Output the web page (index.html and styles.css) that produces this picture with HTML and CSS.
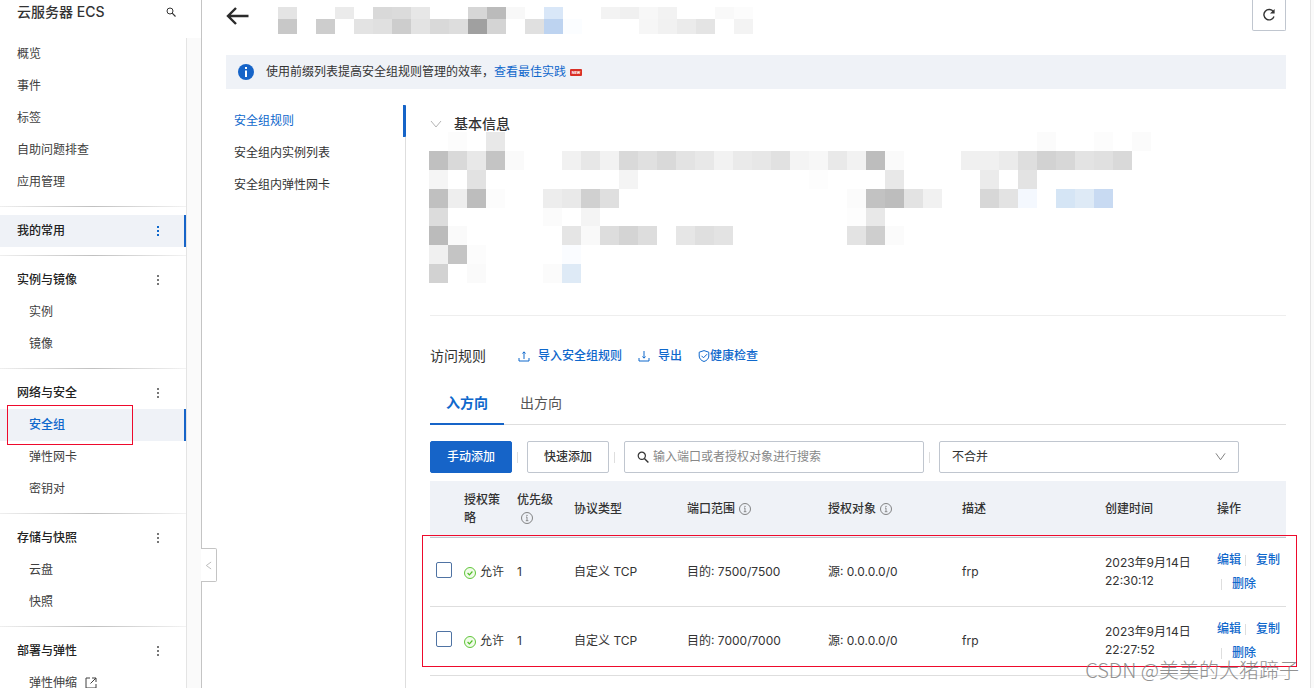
FILE: index.html
```html
<!DOCTYPE html>
<html lang="zh-CN">
<head>
<meta charset="utf-8">
<title>云服务器 ECS</title>
<link rel="stylesheet" href="styles.css">
</head>
<body>
<svg class="defs" aria-hidden="true">
  <symbol id="info" viewBox="0 0 12 12"><circle cx="6" cy="6" r="5.5" fill="none" stroke="currentColor" stroke-width=".8"/><path d="M5 5h1v3.6M4.8 8.7h2.6" fill="none" stroke="currentColor" stroke-width=".7"/><circle cx="6" cy="3.3" r=".6" fill="currentColor"/></symbol>
  <symbol id="allow" viewBox="0 0 12 12"><circle cx="6" cy="6" r="5.5" fill="#f0fbe9" stroke="#4fbe26" stroke-width=".9"/><path d="M3.6 6l1.8 1.8 3-3.3" fill="none" stroke="#4fbe26" stroke-width="1.2"/></symbol>
  <symbol id="search" viewBox="0 0 12 12"><circle cx="4.8" cy="4.8" r="3.6" fill="none" stroke="currentColor" stroke-width="1.2"/><path d="M7.4 7.4l4 4" stroke="currentColor" stroke-width="1.4"/></symbol>
  <symbol id="more" viewBox="0 0 4 12"><path d="M1 1h2v2H1zM1 5h2v2H1zM1 9h2v2H1z" fill="currentColor"/></symbol>
</svg>
<div class="app">
  <aside class="sidebar">
    <header class="side-head"><h1>云服务器 ECS</h1><button class="plain" aria-label="搜索"><svg class="i-10"><use href="#search"/></svg></button></header>
    <div class="side-body">
      <nav class="menu">
        <a href="#">概览</a>
        <a href="#">事件</a>
        <a href="#">标签</a>
        <a href="#">自助问题排查</a>
        <a href="#">应用管理</a>
        <hr>
        <a href="#" class="group current">我的常用<svg class="dots"><use href="#more"/></svg></a>
        <hr>
        <a href="#" class="group">实例与镜像<svg class="dots"><use href="#more"/></svg></a>
        <a href="#" class="sub">实例</a>
        <a href="#" class="sub">镜像</a>
        <hr>
        <a href="#" class="group">网络与安全<svg class="dots"><use href="#more"/></svg></a>
        <a href="#" class="sub current chosen">安全组<span class="mark mark-menu"></span></a>
        <a href="#" class="sub">弹性网卡</a>
        <a href="#" class="sub">密钥对</a>
        <hr>
        <a href="#" class="group">存储与快照<svg class="dots"><use href="#more"/></svg></a>
        <a href="#" class="sub">云盘</a>
        <a href="#" class="sub">快照</a>
        <hr>
        <a href="#" class="group">部署与弹性<svg class="dots"><use href="#more"/></svg></a>
        <a href="#" class="sub">弹性伸缩<svg class="ext" viewBox="0 0 12 12"><path d="M5 1H1v10h10V7M7 1h4v4M11 1L5.500 6.500" fill="none" stroke="currentColor"/></svg></a>
      </nav>
      <div class="track"></div>
    </div>
    <button class="fold" aria-label="收起"><svg viewBox="0 0 8 10"><path d="M7 1L1.500 5 7 9" fill="none" stroke="#b5b5b5"/></svg></button>
  </aside>

  <main class="page">
    <header class="page-head">
      <button class="plain" aria-label="返回"><svg class="back" viewBox="0 0 22 18"><path d="M9.500 1L1.500 9l8 8M2 9h20" fill="none" stroke="#2b2b2b" stroke-width="2.400"/></svg></button>
      <svg class="mosaic head-mosaic" viewBox="0 0 475 27" preserveAspectRatio="none" aria-hidden="true">
        <g class="top">
          <rect x="0" fill="#e4e4e4"/><rect x="57" fill="#ebebeb"/><rect x="95" fill="#d9d9d9"/><rect x="114" fill="#dbdbdb"/><rect x="133" fill="#e7e7e7"/><rect x="190" fill="#d6d6d6"/><rect x="209" fill="#bbb"/><rect x="228" fill="#f8f8f8"/><rect x="266" fill="#d9e7f8"/><rect x="323" fill="#f3f3f3"/><rect x="342" fill="#f0f0f0"/><rect x="361" fill="#f7f7f7"/><rect x="380" fill="#f2f2f2"/><rect x="437" fill="#f9f9f9"/><rect x="456" fill="#fcfcfc"/>
        </g>
        <g class="low">
          <rect x="0" fill="#c8c8c8"/><rect x="38" fill="#cdcdcd"/><rect x="76" fill="#e3e3e3"/><rect x="95" fill="#e0e0e0"/><rect x="114" fill="#cdcdcd"/><rect x="133" fill="#e3e3e3"/><rect x="152" fill="#d9d9d9"/><rect x="171" fill="#ddd"/><rect x="190" fill="#a0a0a0"/><rect x="209" fill="#d4d4d4"/><rect x="247" fill="#e0e0e0"/><rect x="266" fill="#bdd3f0"/><rect x="285" fill="#fbfdff"/><rect x="361" fill="#f6f6f6"/><rect x="380" fill="#f1f1f1"/><rect x="399" fill="#ebebeb"/><rect x="418" fill="#e4e4e4"/><rect x="456" fill="#f3f3f3"/>
        </g>
      </svg>
      <button class="refresh" aria-label="刷新"><svg viewBox="0 0 14 14"><path d="M11.300 3.600A5.200 5.200 0 1 0 12 8.500" fill="none" stroke="#333" stroke-width="1.400"/><path d="M12.600 1v4.600H8z" fill="#333"/></svg></button>
    </header>

    <div class="notice">
      <svg class="i-16" viewBox="0 0 16 16"><circle cx="8" cy="8" r="8" fill="#1664c8"/><path d="M7 3h2v2H7zM7 6.500h2V13H7z" fill="#fff"/></svg>
      <p>使用前缀列表提高安全组规则管理的效率，<a href="#">查看最佳实践</a></p><span class="new">NEW</span>
    </div>

    <div class="columns">
      <nav class="tabs-side">
        <a href="#" class="on">安全组规则</a>
        <a href="#">安全组内实例列表</a>
        <a href="#">安全组内弹性网卡</a>
      </nav>
      <div class="content">
        <section class="basic">
          <h2><svg viewBox="0 0 12 8"><path d="M1 1l5 6 5-6" fill="none" stroke="#b5b5b5"/></svg>基本信息</h2>
          <svg class="mosaic info-mosaic" viewBox="0 0 38 8" preserveAspectRatio="none" aria-hidden="true">
            <g><rect x="1" fill="#fcfcfc"/><rect x="3" fill="#e8e8e8"/><rect x="32" fill="#fbfbfb"/><rect x="35" fill="#fcfcfc"/><rect x="37" fill="#fbfbfb"/></g>
            <g transform="translate(0 1)"><rect x="0" fill="#c0c0c0"/><rect x="1" fill="#d9d9d9"/><rect x="2" fill="#e8e8e8"/><rect x="3" fill="#c4c4c4"/><rect x="4" fill="#fafafa"/><rect x="7" fill="#f1f1f1"/><rect x="8" fill="#e7e7e7"/><rect x="9" fill="#f2f2f2"/><rect x="10" fill="#d9d9d9"/><rect x="11" fill="#e0e0e0"/><rect x="12" fill="#d9d9d9"/><rect x="13" fill="#e3e3e3"/><rect x="14" fill="#e8e8e8"/><rect x="15" fill="#f2f2f2"/><rect x="16" fill="#eaeaea"/><rect x="17" fill="#e7e7e7"/><rect x="18" fill="#e1e1e1"/><rect x="19" fill="#f4f4f4"/><rect x="20" fill="#f7f7f7"/><rect x="21" fill="#e9e9e9"/><rect x="22" fill="#f2f2f2"/><rect x="23" fill="#bdbdbd"/><rect x="24" fill="#fafafa"/><rect x="28" fill="#f0f0f0"/><rect x="29" fill="#f0f0f0"/><rect x="30" fill="#ebebeb"/><rect x="31" fill="#dedede"/><rect x="32" fill="#d2d2d2"/><rect x="33" fill="#d7d7d7"/><rect x="34" fill="#e3e3e3"/><rect x="35" fill="#e0e0e0"/><rect x="36" fill="#d9d9d9"/></g>
            <g transform="translate(0 2)"><rect x="0" fill="#f5f5f5"/><rect x="2" fill="#e2e2e2"/><rect x="10" fill="#f4f4f4"/><rect x="20" fill="#fdfdfd"/><rect x="24" fill="#e8e8e8"/><rect x="29" fill="#ebebeb"/><rect x="31" fill="#e3e3e3"/></g>
            <g transform="translate(0 3)"><rect x="0" fill="#c0c0c0"/><rect x="1" fill="#eee"/><rect x="2" fill="#bdbdbd"/><rect x="3" fill="#fcfcfc"/><rect x="6" fill="#ededed"/><rect x="7" fill="#e9e9e9"/><rect x="8" fill="#d0d0d0"/><rect x="9" fill="#dfdfdf"/><rect x="22" fill="#fbfbfb"/><rect x="23" fill="#c2c2c2"/><rect x="24" fill="#bdbdbd"/><rect x="25" fill="#e3e3e3"/><rect x="26" fill="#f1f1f1"/><rect x="29" fill="#d7d7d7"/><rect x="30" fill="#e3e3e3"/><rect x="31" fill="#f4f8fe"/><rect x="33" fill="#d5e5f5"/><rect x="34" fill="#deeaf6"/><rect x="35" fill="#c8daf2"/></g>
            <g transform="translate(0 4)"><rect x="0" fill="#dcdcdc"/><rect x="6" fill="#fbfbfb"/><rect x="8" fill="#f4f4f4"/><rect x="22" fill="#fdfdfd"/><rect x="23" fill="#e8e8e8"/></g>
            <g transform="translate(0 5)"><rect x="0" fill="#bbb"/><rect x="1" fill="#fafafa"/><rect x="7" fill="#e5e5e5"/><rect x="8" fill="#f9f9f9"/><rect x="9" fill="#ddd"/><rect x="10" fill="#d4d4d4"/><rect x="11" fill="#ddd"/><rect x="13" fill="#e6e6e6"/><rect x="14" fill="#dfdfdf"/><rect x="15" fill="#e3e3e3"/><rect x="22" fill="#e3e3e3"/><rect x="23" fill="#cecece"/><rect x="24" fill="#fbfbfb"/></g>
            <g transform="translate(0 6)"><rect x="0" fill="#f0f0f0"/><rect x="1" fill="#c4c4c4"/><rect x="2" fill="#fcfcfc"/><rect x="7" fill="#fafcff"/></g>
            <g transform="translate(0 7)"><rect x="0" fill="#d2d2d2"/><rect x="2" fill="#fafafa"/><rect x="6" fill="#fbfbfb"/><rect x="7" fill="#deeaf6"/></g>
          </svg>
        </section>

        <section class="rules">
          <div class="rules-head">
            <h2>访问规则</h2>
            <a href="#"><svg class="i-12 spaced" viewBox="0 0 12 12"><path d="M1 8v3h10V8M6 9V2M4.500 3.500L6 1.800l1.500 1.700" fill="none" stroke="currentColor"/></svg>导入安全组规则</a>
            <a href="#"><svg class="i-12 spaced" viewBox="0 0 12 12"><path d="M1 8v3h10V8M6 1v7M4.500 6.500L6 8.200l1.500-1.700" fill="none" stroke="currentColor"/></svg>导出</a>
            <a href="#"><svg class="i-12" viewBox="0 0 12 12"><path d="M6 .6l4.800 1.600V6c0 2.700-2 4.600-4.800 5.500C3.200 10.600 1.200 8.700 1.200 6V2.200zM3.500 5.800l2 2 3.500-3.600" fill="none" stroke="currentColor"/></svg>健康检查</a>
          </div>
          <div class="tabs" role="tablist">
            <button role="tab" aria-selected="true">入方向</button>
            <button role="tab" aria-selected="false">出方向</button>
          </div>
          <div class="toolbar">
            <button class="btn primary">手动添加</button><i class="sep"></i>
            <button class="btn">快速添加</button><i class="sep"></i>
            <label class="field"><svg class="i-12"><use href="#search"/></svg><input type="text" aria-label="搜索" placeholder="输入端口或者授权对象进行搜索"></label><i class="sep"></i>
            <div class="field"><select aria-label="合并方式"><option>不合并</option></select><svg class="arrow" viewBox="0 0 12 8"><path d="M1 0l5 7 5-7" fill="none" stroke="#777"/></svg></div>
          </div>
          <div class="table-wrap">
            <table>
              <colgroup><col class="c-check"><col class="c-policy"><col class="c-prio"><col class="c-proto"><col class="c-port"><col class="c-source"><col class="c-desc"><col class="c-time"><col class="c-ops"></colgroup>
              <thead>
                <tr><th></th><th>授权策略</th><th>优先级 <svg class="tip"><use href="#info"/></svg></th><th>协议类型</th><th>端口范围<svg class="tip"><use href="#info"/></svg></th><th>授权对象<svg class="tip"><use href="#info"/></svg></th><th>描述</th><th>创建时间</th><th>操作</th></tr>
              </thead>
              <tbody>
                <tr><td><input type="checkbox" aria-label="选择端口 7500"></td><td><svg class="ok"><use href="#allow"/></svg>允许</td><td>1</td><td>自定义 TCP</td><td>目的: 7500/7500</td><td>源: 0.0.0.0/0</td><td>frp</td><td>2023年9月14日 22:30:12</td><td class="ops"><a href="#">编辑</a><i class="bar"></i><a href="#">复制</a><br><i class="bar"></i><a href="#">删除</a></td></tr>
                <tr><td><input type="checkbox" aria-label="选择端口 7000"></td><td><svg class="ok"><use href="#allow"/></svg>允许</td><td>1</td><td>自定义 TCP</td><td>目的: 7000/7000</td><td>源: 0.0.0.0/0</td><td>frp</td><td>2023年9月14日 22:27:52</td><td class="ops"><a href="#">编辑</a><i class="bar"></i><a href="#">复制</a><br><i class="bar"></i><a href="#">删除</a></td></tr>
              </tbody>
            </table>
            <div class="mark mark-rows"></div>
          </div>
        </section>
      </div>
    </div>
  </main>
  <div class="page-track"></div>
  <div class="watermark">CSDN @美美的大猪蹄子</div>
</div>
</body>
</html>
```
FILE: styles.css
```css
* { box-sizing: border-box; }
body {
  margin: 0;
  font: 12px/18px Inter, "Noto Sans CJK SC", sans-serif;
  color: #333;
  background: #fff;
}
a { color: #0f68cc; text-decoration: none; }
h1, h2, p { margin: 0; }
h1, h2 { font-size: 14px; font-weight: 500; }
svg { display: block; flex: none; }
button, input, select { font: inherit; color: inherit; }
.defs { position: absolute; width: 0; height: 0; }
.plain { padding: 0; border: 0; background: none; }
.i-10 { width: 10px; height: 10px; }
.i-12 { width: 12px; height: 12px; }
.i-16 { width: 16px; height: 16px; }

.app { position: relative; display: flex; height: 100vh; overflow: hidden; }

/* sidebar */
.sidebar {
  position: relative;
  display: flex;
  flex-direction: column;
  flex: none;
  width: 202px;
  border-right: 1px solid #c4c4c4;
}
.side-head {
  display: flex;
  justify-content: space-between;
  align-items: center;
  flex: none;
  height: 38px;
  padding: 0 25px 14px 17px;
}
.side-body { display: flex; flex: 1; min-height: 0; }
.menu { flex: 1; overflow: hidden; }
.menu a {
  position: relative;
  display: flex;
  align-items: center;
  height: 32px;
  padding-left: 17px;
  color: #404040;
}
.menu .group { justify-content: space-between; padding-right: 26px; font-weight: 500; color: #222; }
.menu .sub { padding-left: 29px; }
.menu .current { background: #eff2f7; border-right: 2px solid #1664c8; }
.menu .group.current { padding-right: 24px; }
.menu .chosen { font-weight: 500; color: #0f68cc; }
.menu hr {
  height: 1px;
  margin: 8px 0;
  border: 0;
  background: linear-gradient(90deg, #efefef, #c0c0c0 50%, #f3f3f3);
}
.dots { width: 4px; height: 12px; color: #777; }
.current .dots { color: #0f68cc; }
.ext { width: 12px; height: 12px; margin-left: 8px; }
.track { flex: none; width: 15px; background: #fafafa; border-left: 1px solid #e4e4e4; }
.fold {
  position: absolute;
  z-index: 2;
  top: 548px;
  left: 201px;
  display: grid;
  place-items: center;
  width: 16px;
  height: 34px;
  padding: 0;
  border: 1px solid #c4c4c4;
  border-left: 0;
  border-radius: 0 2px 2px 0;
  background: #fff;
}
.fold svg { width: 7px; height: 9px; }

/* page */
.page { display: flex; flex-direction: column; flex: 1; min-width: 0; padding: 0 24px; }
.page-track { flex: none; width: 4px; background: #fafafa; border-left: 1px solid #e4e4e4; }
.page-head { display: flex; align-items: flex-start; flex: none; height: 55px; }
.back { width: 23px; height: 18px; margin: 7px 29px 0 0; }
.mosaic { shape-rendering: crispEdges; }
.head-mosaic { width: 475px; height: 27px; margin-top: 7px; }
.top rect { width: 19px; height: 12px; }
.low rect { y: 12px; width: 19px; height: 15px; }
.refresh {
  display: grid;
  place-items: center;
  width: 34px;
  height: 31px;
  margin-left: auto;
  padding: 0;
  border: 1px solid #c0c6cf;
  border-top: 0;
  border-radius: 0 0 2px 2px;
  background: #fff;
}
.refresh svg { width: 14px; height: 14px; }
.notice {
  display: flex;
  align-items: center;
  flex: none;
  height: 34px;
  padding-left: 12px;
  background: #eff2f7;
}
.notice p { margin-left: 12px; }
.new {
  width: 12px;
  height: 7px;
  margin-left: 4px;
  border-radius: 1px;
  background: #d93026;
  color: #fff;
  font: bold 4px/7px Roboto, sans-serif;
  text-align: center;
}
.columns { display: flex; flex: 1; min-height: 0; padding-top: 16px; }
.tabs-side { flex: none; width: 180px; border-right: 1px solid #dedede; }
.tabs-side a { display: block; margin-right: -1px; padding-left: 8px; line-height: 32px; color: #333; }
.tabs-side .on { color: #0f68cc; border-right: 3px solid #1664c8; border-radius: 1px; }
.content { flex: 1; min-width: 0; padding-left: 24px; }

.basic { padding: 11px 0 32px; border-bottom: 1px solid #eee; }
.basic h2 { display: flex; align-items: center; line-height: 16px; }
.basic h2 svg { width: 12px; height: 8px; margin-right: 12px; }
.info-mosaic { width: 722px; height: 151px; margin-left: -1px; }
.info-mosaic rect { width: 1px; height: 1px; }

.rules-head { display: flex; align-items: center; gap: 16px; padding-top: 30px; line-height: 20px; }
.rules-head h2 { margin-right: 16px; font-weight: 400; }
.rules-head a { display: flex; align-items: center; font-weight: 500; }
.rules-head .spaced { margin-right: 8px; }
.tabs { display: flex; margin-top: 17px; border-bottom: 1px solid #dedede; }
.tabs button {
  height: 42px;
  margin-bottom: -1px;
  padding: 0 16px;
  border: 0;
  border-bottom: 2px solid transparent;
  background: none;
  font-size: 14px;
  color: #555;
}
.tabs [aria-selected="true"] { border-color: #1664c8; color: #0f68cc; font-weight: 700; }
.toolbar { display: flex; align-items: center; padding: 16px 0 8px; }
.btn {
  width: 82px;
  height: 32px;
  padding: 0;
  border: 1px solid #c0c6cf;
  border-radius: 2px;
  background: #fff;
  font-weight: 500;
}
.primary { border-color: #1664c8; background: #1664c8; color: #fff; }
.sep { width: 1px; height: 11px; margin: 0 9px 0 5px; background: #dedede; }
.field {
  display: flex;
  align-items: center;
  flex: 0 1 300px;
  height: 32px;
  padding: 0 12px;
  border: 1px solid #c0c6cf;
  border-radius: 2px;
}
.field input, .field select { flex: 1; min-width: 0; padding: 0; border: 0; outline: 0; background: none; appearance: none; }
.field input { margin-left: 4px; }
.field input::placeholder { color: #888; opacity: 1; }
.arrow { width: 11px; height: 8px; }

.table-wrap { position: relative; }
table { width: 100%; table-layout: fixed; border-collapse: separate; border-spacing: 0; }
.c-check { width: 26px; }
.c-policy { width: 53px; }
.c-prio { width: 57px; }
.c-proto { width: 113px; }
.c-port { width: 141px; }
.c-source { width: 134px; }
.c-desc { width: 143px; }
.c-time { width: 112px; }
.c-ops { width: 77px; }
th, td { padding: 0 0 0 8px; text-align: left; vertical-align: middle; }
th { height: 57px; border-bottom: 1px solid #c0c6cf; background: #eff2f7; font-weight: 500; }
td { height: 69px; border-bottom: 1px solid #dedede; }
th:first-child, td:first-child { padding-left: 6px; }
td input {
  display: block;
  width: 16px;
  height: 16px;
  margin: 0 0 4px;
  border: 1px solid #4f73a3;
  border-radius: 2px;
  appearance: none;
}
.tip, .ok { display: inline-block; width: 12px; height: 12px; vertical-align: -2px; }
.tip { margin-left: 4px; color: #666; }
.ok { margin-right: 4px; vertical-align: -3px; }
.ops { line-height: 24px; white-space: nowrap; }
.ops a { font-weight: 500; }
.bar { display: inline-block; width: 1px; height: 11px; margin: 0 10px 0 4px; background: #dedede; vertical-align: -2px; }

/* highlight frames and watermark lie over the page */
.mark { position: absolute; border: 1px solid #ee0a2c; pointer-events: none; }
.mark-menu { top: -4px; left: 7px; width: 126px; height: 40px; }
.mark-rows { top: 54px; bottom: 9px; left: -8px; right: -11px; }
.watermark {
  position: absolute;
  right: 15px;
  bottom: 4px;
  font: 300 20px/28px "Noto Sans CJK SC", sans-serif;
  color: #777;
  opacity: .8;
}
```
